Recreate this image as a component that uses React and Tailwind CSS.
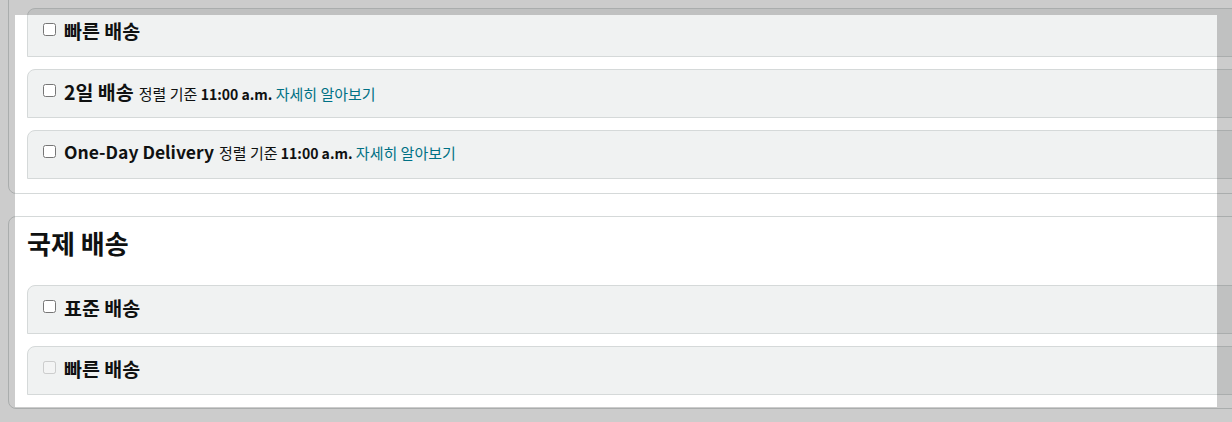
const font = { fontFamily: '"Noto Sans CJK KR", "Noto Sans", sans-serif' };

const domestic = [
  { id: 'fast', label: '빠른 배송' },
  { id: 'two-day', label: '2일 배송', note: true },
  { id: 'one-day', label: 'One-Day Delivery', latin: true, note: true },
];

const international = [
  { id: 'intl-standard', label: '표준 배송' },
  { id: 'intl-fast', label: '빠른 배송', disabled: true },
];

function OptionRow({ label, latin, note, disabled }) {
  return (
    <label className="flex h-[49px] items-center rounded-t-lg border border-[#d5d9d9] bg-[#f0f2f2] pl-[15px]">
      <input
        type="checkbox"
        disabled={disabled}
        className="m-0 h-[13px] w-[13px] shrink-0 -translate-y-[3px]"
      />
      <span className="ml-[8px] flex -translate-y-[2px] items-baseline whitespace-nowrap text-[#0f1111]">
        <span className={latin ? 'text-[17.5px] font-bold' : 'text-[19.5px] font-bold'}>{label}</span>
        {note && (
          <span className="ml-[5px] text-[15px]">
            정렬 기준 <span className="text-[14px] font-bold">11:00 a.m.</span>{' '}
            <a className="text-[#007185]">자세히 알아보기</a>
          </span>
        )}
      </span>
    </label>
  );
}

export default function App() {
  return (
    <div className="relative h-[422px] w-[1232px] overflow-hidden bg-white" style={font}>
      <div className="w-[1300px] pl-[8px]">
        {/* domestic card, its top is scrolled out of view */}
        <div className="-mt-[20px] rounded-lg border border-[#d5d9d9] px-[18px] pb-[14px] pt-[27px]">
          <div className="flex flex-col gap-[12px]">
            {domestic.map((o) => (
              <OptionRow key={o.id} {...o} />
            ))}
          </div>
        </div>

        {/* international card */}
        <div className="mt-[22px] rounded-lg border border-[#d5d9d9] px-[18px] pb-[13px] pt-[12px]">
          <h2 className="-mt-[3px] text-[26px] font-bold leading-[33px] text-[#0f1111]">국제 배송</h2>
          <div className="mt-[26px] flex flex-col gap-[12px]">
            {international.map((o) => (
              <OptionRow key={o.id} {...o} />
            ))}
          </div>
        </div>
      </div>

      {/* spotlight overlay */}
      <div className="pointer-events-none absolute left-[15px] top-[15px] h-[392px] w-[1202px] shadow-[0_0_0_2000px_rgba(0,0,0,0.2)]" />
    </div>
  );
}
